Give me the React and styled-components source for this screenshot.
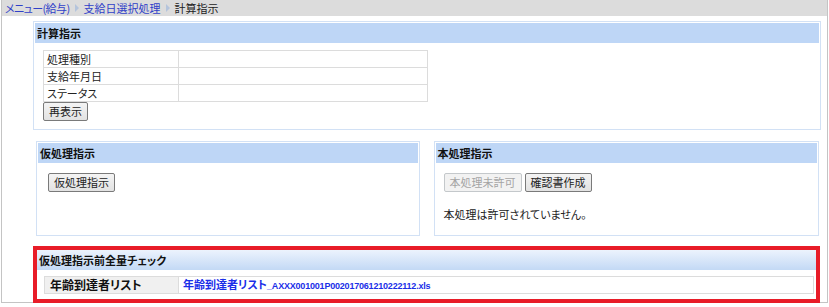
import React from "react";
import styled, { createGlobalStyle } from "styled-components";

const Global = createGlobalStyle`
  html, body { margin: 0; padding: 0; background: #fff; }
  body {
    font-family: "Noto Sans CJK JP", "Noto Sans", sans-serif;
    font-size: 11px;
    color: #222;
    font-feature-settings: "palt";
  }
  * { box-sizing: border-box; }
`;

const Frame = styled.div`
  width: 827px;
  height: 303px;
  border-left: 1px solid #c4c4c4;
  border-right: 1px solid #c4c4c4;
  border-bottom: 1px solid #c4c4c4;
  margin-left: 1px;
  display: flex;
  flex-direction: column;
`;

const Crumbs = styled.div`
  height: 16px;
  background: #dcdcdc;
  display: flex;
  align-items: center;
  padding-left: 3px;
  gap: 4px;
  font-size: 11px;
  line-height: 16px;
`;

const Crumb = styled.span`
  color: ${(p) => (p.$current ? "#222" : "#3040c8")};
  letter-spacing: ${(p) => (p.$tight ? "-0.6px" : "0")};
`;

const Arrow = styled.span`
  width: 0;
  height: 0;
  border-top: 4px solid transparent;
  border-bottom: 4px solid transparent;
  border-left: 4px solid #b4c4dc;
  margin: 0 1px;
`;

const Content = styled.div`
  padding: 5px 6px 0 31px;
  display: flex;
  flex-direction: column;
`;

const Panel = styled.div`
  border: 1px solid #d2e1f5;
  padding: 1px;
  background: #fff;
  display: flex;
  flex-direction: column;
  height: ${(p) => p.$h || "auto"};
`;

const Header = styled.div`
  height: 20px;
  line-height: 20px;
  padding-left: ${(p) => p.$pl || "2px"};
  font-weight: bold;
  color: #111;
  background: ${(p) =>
    p.$grad
      ? "linear-gradient(to bottom, #ecf3fd 0%, #c3d9f5 100%)"
      : "#bed6f6"};
`;

const Body = styled.div`
  padding: ${(p) => p.$pad || "7px 8px"};
  display: flex;
  flex-direction: column;
  align-items: flex-start;
`;

const InfoTable = styled.table`
  border-collapse: collapse;
  width: ${(p) => p.$w || "385px"};
  & td {
    border: 1px solid #dcdcdc;
    height: 17px;
    padding: 0 3px;
    line-height: 15px;
  }
  & td:first-child {
    width: 135px;
  }
`;

const Button = styled.button`
  font-family: inherit;
  font-feature-settings: "palt";
  font-size: 11px;
  height: 19px;
  padding: 0 5px;
  border: 1px solid ${(p) => (p.disabled ? "#c4c8cb" : "#7a7a7a")};
  border-radius: 2px;
  color: ${(p) => (p.disabled ? "#a4a4a4" : "#222")};
  background: ${(p) =>
    p.disabled ? "#f2f2f2" : "linear-gradient(to bottom, #f4f4f4, #e2e2e2)"};
  line-height: 17px;
`;

const Row = styled.div`
  display: flex;
  gap: 14px;
  margin: 11px 2px 0 3px;
`;

const Half = styled.div`
  flex: ${(p) => p.$flex};
  display: flex;
  flex-direction: column;
`;

const Buttons = styled.div`
  display: flex;
  gap: 3px;
`;

const Note = styled.div`
  margin-top: 14px;
`;

const RedBox = styled.div`
  margin: 10px 1px 0 0;
  border: 4px solid #e81c28;
  height: 57px;
  display: flex;
  flex-direction: column;
`;

const CheckTable = styled.table`
  border-collapse: collapse;
  width: 770px;
  & td {
    border: 1px solid #dcdcdc;
    height: 16px;
    padding: 0 4px;
    line-height: 14px;
    white-space: nowrap;
  }
`;

const LabelCell = styled.td`
  width: 134px;
  background: #f0f0f0;
  font-weight: bold;
  font-size: 12px;
  color: #111;
  && { padding-left: 5px; }
`;

const FileLink = styled.a`
  color: #1a2ee8;
  font-weight: bold;
  text-decoration: none;
  font-size: 11px;
`;

const FileTail = styled.span`
  font-family: "Liberation Sans", Arial, sans-serif;
  font-size: 9px;
  font-weight: bold;
  letter-spacing: -0.2px;
`;

export default function App() {
  return (
    <>
      <Global />
      <Frame>
        <Crumbs>
          <Crumb $tight>メニュー(給与)</Crumb>
          <Arrow />
          <Crumb>支給日選択処理</Crumb>
          <Arrow />
          <Crumb $current>計算指示</Crumb>
        </Crumbs>
        <Content>
          <Panel $h="109px">
            <Header>計算指示</Header>
            <Body>
              <InfoTable>
                <tbody>
                  <tr><td>処理種別</td><td></td></tr>
                  <tr><td>支給年月日</td><td></td></tr>
                  <tr><td>ステータス</td><td></td></tr>
                </tbody>
              </InfoTable>
              <Button>再表示</Button>
            </Body>
          </Panel>
          <Row>
            <Half $flex="383">
              <Panel $h="95px">
                <Header>仮処理指示</Header>
                <Body $pad="10px 10px">
                  <Button>仮処理指示</Button>
                </Body>
              </Panel>
            </Half>
            <Half $flex="385">
              <Panel $h="95px">
                <Header>本処理指示</Header>
                <Body $pad="10px 8px">
                  <Buttons>
                    <Button disabled>本処理未許可</Button>
                    <Button>確認書作成</Button>
                  </Buttons>
                  <Note>本処理は許可されていません。</Note>
                </Body>
              </Panel>
            </Half>
          </Row>
          <RedBox>
            <Header $grad $pl="2px">仮処理指示前全量チェック</Header>
            <Body $pad="6px 7px">
              <CheckTable>
                <tbody>
                  <tr>
                    <LabelCell>年齢到達者リスト</LabelCell>
                    <td>
                      <FileLink href="#">
                        年齢到達者リスト
                        <FileTail>_AXXX001001P002017061210222112.xls</FileTail>
                      </FileLink>
                    </td>
                  </tr>
                </tbody>
              </CheckTable>
            </Body>
          </RedBox>
        </Content>
      </Frame>
    </>
  );
}
